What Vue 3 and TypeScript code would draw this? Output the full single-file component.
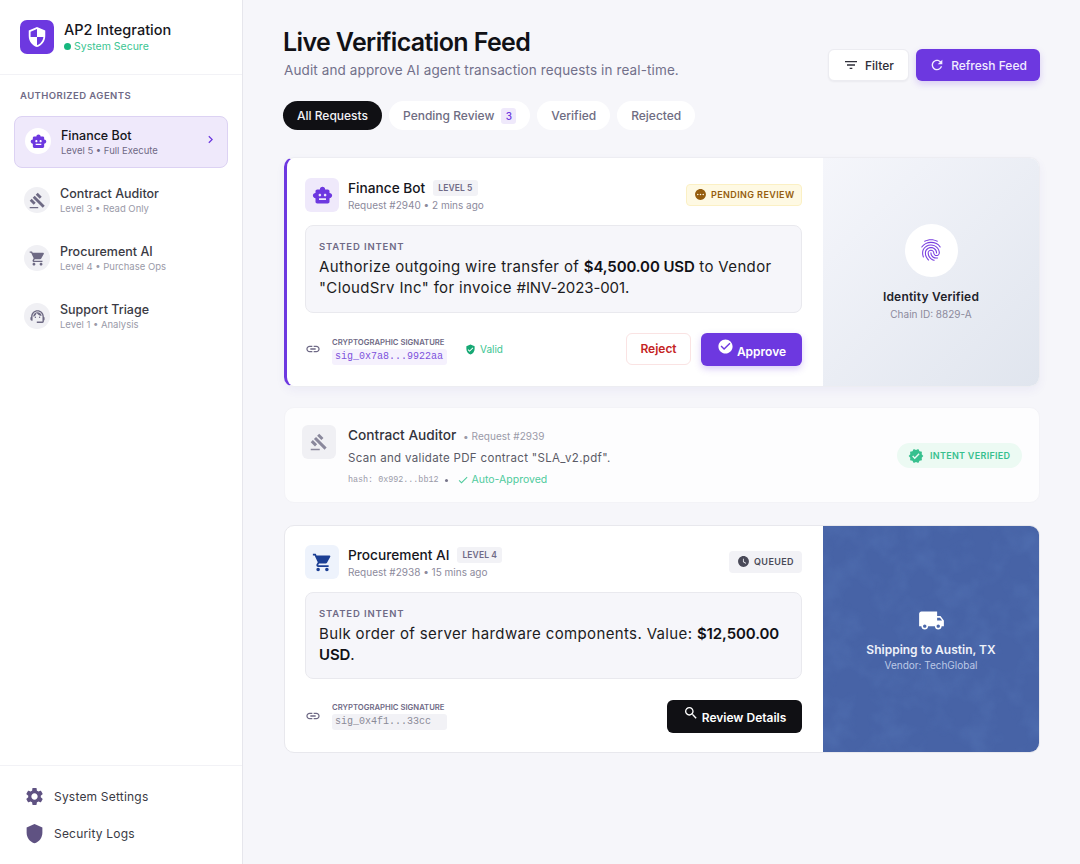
<script setup lang="ts">
const icons: Record<string, string> = {
  robot: 'M20 9V7c0-1.1-.9-2-2-2h-3c0-1.66-1.34-3-3-3S9 3.34 9 5H6c-1.1 0-2 .9-2 2v2c-1.66 0-3 1.34-3 3s1.34 3 3 3v4c0 1.1.9 2 2 2h12c1.1 0 2-.9 2-2v-4c1.66 0 3-1.34 3-3s-1.34-3-3-3zM7.5 11.5c0-.83.67-1.5 1.5-1.5s1.5.67 1.5 1.5S9.83 13 9 13s-1.5-.67-1.5-1.5zM16 17H8v-2h8v2zm-1-4c-.83 0-1.5-.67-1.5-1.5S14.17 10 15 10s1.5.67 1.5 1.5S15.83 13 15 13z',
  gavel: 'M1 21h12v2H1zM5.245 8.07l2.83-2.827 14.14 14.142-2.828 2.828zM12.317 1l5.657 5.656-2.83 2.83-5.654-5.66zM3.825 9.485l5.657 5.657-2.828 2.828-5.657-5.657z',
  cart: 'M7 18c-1.1 0-1.99.9-1.99 2S5.9 22 7 22s2-.9 2-2-.9-2-2-2zM1 2v2h2l3.6 7.59-1.35 2.45c-.16.28-.25.61-.25.96 0 1.1.9 2 2 2h12v-2H7.42c-.14 0-.25-.11-.25-.25l.03-.12.9-1.63h7.45c.75 0 1.41-.41 1.75-1.03l3.58-6.49c.08-.14.12-.31.12-.48 0-.55-.45-1-1-1H5.21l-.94-2H1zm16 16c-1.1 0-1.99.9-1.99 2s.89 2 1.99 2 2-.9 2-2-.9-2-2-2z',
  agent: 'M21 12.22C21 6.73 16.74 3 12 3c-4.69 0-9 3.65-9 9.28-.6.34-1 .98-1 1.72v2c0 1.1.9 2 2 2h1v-6.1c0-3.87 3.13-7 7-7s7 3.13 7 7V19h-8v2h8c1.1 0 2-.9 2-2v-1.22c.59-.31 1-.92 1-1.64v-2.3c0-.7-.41-1.31-1-1.62zM18 11.03C17.52 8.18 15.04 6 12.05 6c-3.03 0-6.29 2.51-6.03 6.45 2.47-1.01 4.33-3.21 4.86-5.89 1.31 2.63 4 4.44 7.12 4.47zM9 12a1 1 0 1 1 0 2 1 1 0 0 1 0-2zM15 12a1 1 0 1 1 0 2 1 1 0 0 1 0-2z',
  settings: 'M19.14 12.94c.04-.3.06-.61.06-.94 0-.32-.02-.64-.07-.94l2.03-1.58c.18-.14.23-.41.12-.61l-1.92-3.32c-.12-.22-.37-.29-.59-.22l-2.39.96c-.5-.38-1.03-.7-1.62-.94l-.36-2.54c-.04-.24-.24-.41-.48-.41h-3.84c-.24 0-.43.17-.47.41l-.36 2.54c-.59.24-1.13.57-1.62.94l-2.39-.96c-.22-.08-.47 0-.59.22L2.74 8.87c-.12.21-.08.47.12.61l2.03 1.58c-.05.3-.09.63-.09.94s.02.64.07.94l-2.03 1.58c-.18.14-.23.41-.12.61l1.92 3.32c.12.22.37.29.59.22l2.39-.96c.5.38 1.03.7 1.62.94l.36 2.54c.05.24.24.41.48.41h3.84c.24 0 .44-.17.47-.41l.36-2.54c.59-.24 1.13-.56 1.62-.94l2.39.96c.22.08.47 0 .59-.22l1.92-3.32c.12-.22.07-.47-.12-.61l-2.01-1.58zM12 15.6c-1.98 0-3.6-1.62-3.6-3.6s1.62-3.6 3.6-3.6 3.6 1.62 3.6 3.6-1.62 3.6-3.6 3.6z',
  shield: 'M12 1L3 5v6c0 5.55 3.84 10.74 9 12 5.16-1.26 9-6.45 9-12V5l-9-4z',
  security: 'M12 1L3 5v6c0 5.55 3.84 10.74 9 12 5.16-1.26 9-6.45 9-12V5l-9-4zm0 10.99h7c-.53 4.12-3.28 7.79-7 8.94V12H5V6.3l7-3.11v8.8z',
  filter: 'M10 18h4v-2h-4v2zM3 6v2h18V6H3zm3 7h12v-2H6v2z',
  refresh: 'M17.65 6.35C16.2 4.9 14.21 4 12 4c-4.42 0-7.99 3.58-7.99 8s3.57 8 7.99 8c3.73 0 6.84-2.55 7.73-6h-2.08c-.82 2.33-3.04 4-5.65 4-3.31 0-6-2.69-6-6s2.69-6 6-6c1.66 0 3.14.69 4.22 1.78L13 11h7V4l-2.35 2.35z',
  chevron: 'M10 6L8.59 7.41 13.17 12l-4.58 4.59L10 18l6-6z',
  pending: 'M12 2C6.48 2 2 6.48 2 12s4.48 10 10 10 10-4.48 10-10S17.52 2 12 2zM7 13.5c-.83 0-1.5-.67-1.5-1.5s.67-1.5 1.5-1.5 1.5.67 1.5 1.5-.67 1.5-1.5 1.5zm5 0c-.83 0-1.5-.67-1.5-1.5s.67-1.5 1.5-1.5 1.5.67 1.5 1.5-.67 1.5-1.5 1.5zm5 0c-.83 0-1.5-.67-1.5-1.5s.67-1.5 1.5-1.5 1.5.67 1.5 1.5-.67 1.5-1.5 1.5z',
  link: 'M3.9 12c0-1.71 1.39-3.1 3.1-3.1h4V7H7c-2.76 0-5 2.24-5 5s2.24 5 5 5h4v-1.9H7c-1.71 0-3.1-1.39-3.1-3.1zM8 13h8v-2H8v2zm9-6h-4v1.9h4c1.71 0 3.1 1.39 3.1 3.1s-1.39 3.1-3.1 3.1h-4V17h4c2.76 0 5-2.24 5-5s-2.24-5-5-5z',
  verifiedUser: 'M12 1L3 5v6c0 5.55 3.84 10.74 9 12 5.16-1.26 9-6.45 9-12V5l-9-4zm-2 16l-4-4 1.41-1.41L10 14.17l6.59-6.59L18 9l-8 8z',
  checkCircle: 'M12 2C6.48 2 2 6.48 2 12s4.48 10 10 10 10-4.48 10-10S17.52 2 12 2zm-2 15l-5-5 1.41-1.41L10 14.17l7.59-7.59L19 8l-9 9z',
  fingerprint: 'M17.81 4.47c-.08 0-.16-.02-.23-.06C15.66 3.42 14 3 12.01 3c-1.98 0-3.86.47-5.57 1.41-.24.13-.54.04-.68-.2-.13-.24-.04-.55.2-.68C7.82 2.52 9.86 2 12.01 2c2.13 0 3.99.47 6.03 1.52.25.13.34.43.21.67-.09.18-.26.28-.44.28zM3.5 9.72c-.1 0-.2-.03-.29-.09-.23-.16-.28-.47-.12-.7.99-1.4 2.25-2.5 3.75-3.27C9.98 4.04 14 4.03 17.15 5.65c1.5.77 2.76 1.86 3.75 3.25.16.22.11.54-.12.7-.23.16-.54.11-.7-.12-.9-1.26-2.04-2.25-3.39-2.94-2.87-1.47-6.54-1.47-9.4.01-1.36.7-2.5 1.7-3.4 2.96-.08.14-.23.21-.39.21zm6.25 12.07c-.13 0-.26-.05-.35-.15-.87-.87-1.34-1.43-2.01-2.64-.69-1.23-1.05-2.73-1.05-4.34 0-2.97 2.54-5.39 5.66-5.39s5.66 2.42 5.66 5.39c0 .28-.22.5-.5.5s-.5-.22-.5-.5c0-2.42-2.09-4.39-4.66-4.39-2.57 0-4.66 1.97-4.66 4.39 0 1.44.32 2.77.93 3.85.64 1.15 1.08 1.64 1.85 2.42.19.2.19.51 0 .71-.11.1-.24.15-.37.15zm7.17-1.85c-1.19 0-2.24-.3-3.1-.89-1.49-1.01-2.38-2.65-2.38-4.39 0-.28.22-.5.5-.5s.5.22.5.5c0 1.41.72 2.74 1.94 3.56.71.48 1.54.71 2.54.71.24 0 .64-.03 1.04-.1.27-.05.53.13.58.41.05.27-.13.53-.41.58-.57.11-1.07.12-1.21.12zM14.91 22c-.04 0-.09-.01-.13-.02-1.59-.44-2.63-1.03-3.72-2.1-1.4-1.39-2.17-3.24-2.17-5.22 0-1.62 1.38-2.94 3.08-2.94 1.7 0 3.08 1.32 3.08 2.94 0 1.07.93 1.94 2.08 1.94s2.08-.87 2.08-1.94c0-3.77-3.25-6.83-7.25-6.83-2.84 0-5.44 1.58-6.61 4.03-.39.81-.59 1.76-.59 2.8 0 .78.07 2.01.67 3.61.1.26-.03.55-.29.64-.26.1-.55-.04-.64-.29-.49-1.31-.73-2.61-.73-3.96 0-1.2.23-2.29.68-3.24 1.33-2.79 4.28-4.6 7.51-4.6 4.55 0 8.25 3.51 8.25 7.83 0 1.62-1.38 2.94-3.08 2.94s-3.08-1.32-3.08-2.94c0-1.07-.93-1.94-2.08-1.94s-2.08.87-2.08 1.94c0 1.71.66 3.31 1.87 4.51.95.94 1.86 1.46 3.27 1.85.27.07.42.35.35.61-.05.23-.26.38-.47.38z',
  clock: 'M12 2C6.5 2 2 6.5 2 12s4.5 10 10 10 10-4.5 10-10S17.5 2 12 2zm4.2 14.2L11 13V7h1.5v5.2l4.5 2.7-.8 1.3z',
  truck: 'M20 8h-3V4H3c-1.1 0-2 .9-2 2v11h2c0 1.66 1.34 3 3 3s3-1.34 3-3h6c0 1.66 1.34 3 3 3s3-1.34 3-3h2v-5l-3-4zM6 18.5c-.83 0-1.5-.67-1.5-1.5s.67-1.5 1.5-1.5 1.5.67 1.5 1.5-.67 1.5-1.5 1.5zm13.5-9l1.96 2.5H17V9.5h2.5zm-1.5 9c-.83 0-1.5-.67-1.5-1.5s.67-1.5 1.5-1.5 1.5.67 1.5 1.5-.67 1.5-1.5 1.5z',
  search: 'M15.5 14h-.79l-.28-.27C15.41 12.59 16 11.11 16 9.5 16 5.91 13.09 3 9.5 3S3 5.91 3 9.5 5.91 16 9.5 16c1.61 0 3.09-.59 4.23-1.57l.27.28v.79l5 4.99L20.49 19l-4.99-5zm-6 0C7.01 14 5 11.99 5 9.5S7.01 5 9.5 5 14 7.01 14 9.5 11.99 14 9.5 14z',
  verified: 'M23 12l-2.44-2.79.34-3.69-3.61-.82-1.89-3.2L12 2.96 8.6 1.5 6.71 4.69 3.1 5.5l.34 3.7L1 12l2.44 2.79-.34 3.7 3.61.82L8.6 22.5l3.4-1.47 3.4 1.46 1.89-3.19 3.61-.82-.34-3.69L23 12zm-12.91 4.72l-3.8-3.81 1.48-1.48 2.32 2.33 5.85-5.87 1.48 1.48-7.33 7.35z',
  check: 'M9 16.17L4.83 12l-1.42 1.41L9 19 21 7l-1.41-1.41z',
}

const agents = [
  { name: 'Finance Bot', sub: 'Level 5 • Full Execute', icon: 'robot', active: true },
  { name: 'Contract Auditor', sub: 'Level 3 • Read Only', icon: 'gavel', active: false },
  { name: 'Procurement AI', sub: 'Level 4 • Purchase Ops', icon: 'cart', active: false },
  { name: 'Support Triage', sub: 'Level 1 • Analysis', icon: 'agent', active: false },
]
const tabs = [
  { label: 'All Requests', active: true, count: '' },
  { label: 'Pending Review', active: false, count: '3' },
  { label: 'Verified', active: false, count: '' },
  { label: 'Rejected', active: false, count: '' },
]
</script>

<template>
  <div class="app">
    <aside class="side">
      <div class="brand">
        <div class="logo"><svg viewBox="0 0 24 24" width="22" height="22"><path :d="icons.security" fill="#fff" /></svg></div>
        <div>
          <div class="brand-name">AP2 Integration</div>
          <div class="brand-status"><i class="dot"></i>System Secure</div>
        </div>
      </div>
      <div class="side-label">AUTHORIZED AGENTS</div>
      <nav class="agents">
        <div v-for="a in agents" :key="a.name" class="agent" :class="{ on: a.active }">
          <div class="agent-ico"><svg viewBox="0 0 24 24" width="17" height="17"><path :d="icons[a.icon]" /></svg></div>
          <div class="agent-txt">
            <div class="agent-name">{{ a.name }}</div>
            <div class="agent-sub">{{ a.sub }}</div>
          </div>
          <svg v-if="a.active" class="chev" viewBox="0 0 24 24" width="15" height="15"><path :d="icons.chevron" /></svg>
        </div>
      </nav>
      <div class="side-foot">
        <div class="foot-row"><svg viewBox="0 0 24 24" width="21" height="21"><path :d="icons.settings" /></svg>System Settings</div>
        <div class="foot-row"><svg viewBox="0 0 24 24" width="21" height="21"><path :d="icons.shield" /></svg>Security Logs</div>
      </div>
    </aside>

    <main class="main">
      <header class="head">
        <div>
          <h1>Live Verification Feed</h1>
          <p>Audit and approve AI agent transaction requests in real-time.</p>
        </div>
        <div class="head-btns">
          <button class="btn-filter"><svg viewBox="0 0 24 24" width="16" height="16"><path :d="icons.filter" /></svg>Filter</button>
          <button class="btn-refresh"><svg viewBox="0 0 24 24" width="16" height="16"><path :d="icons.refresh" /></svg>Refresh Feed</button>
        </div>
      </header>

      <div class="tabs">
        <div v-for="t in tabs" :key="t.label" class="tab" :class="{ on: t.active }">
          {{ t.label }}<span v-if="t.count" class="count">{{ t.count }}</span>
        </div>
      </div>

      <section class="card card-pending">
        <div class="card-body">
          <div class="card-top">
            <div class="req-ico purple"><svg viewBox="0 0 24 24" width="21" height="21"><path :d="icons.robot" /></svg></div>
            <div class="req-id">
              <div class="req-title">Finance Bot <span class="lvl">LEVEL 5</span></div>
              <div class="req-meta">Request #2940 • 2 mins ago</div>
            </div>
            <div class="status pending"><svg viewBox="0 0 24 24" width="13" height="13"><path :d="icons.pending" /></svg>PENDING REVIEW</div>
          </div>
          <div class="intent">
            <div class="intent-label">STATED INTENT</div>
            <div class="intent-text">Authorize outgoing wire transfer of <b>$4,500.00 USD</b> to Vendor "CloudSrv Inc" for invoice <span class="tight">#INV-2023-001.</span></div>
          </div>
          <div class="card-foot">
            <svg class="link-ico" viewBox="0 0 24 24" width="16" height="16"><path :d="icons.link" /></svg>
            <div class="sig">
              <div class="sig-label">CRYPTOGRAPHIC SIGNATURE</div>
              <div class="sig-val violet">sig_0x7a8...9922aa</div>
            </div>
            <div class="valid"><svg viewBox="0 0 24 24" width="11" height="11"><path :d="icons.verifiedUser" /></svg>Valid</div>
            <div class="actions">
              <button class="btn-reject">Reject</button>
              <button class="btn-approve"><svg viewBox="0 0 24 24" width="17" height="17"><path :d="icons.checkCircle" /></svg><span>Approve</span></button>
            </div>
          </div>
        </div>
        <aside class="panel panel-id">
          <div class="fp"><svg viewBox="0 0 24 24" width="26" height="26"><path :d="icons.fingerprint" /></svg></div>
          <div class="panel-title">Identity Verified</div>
          <div class="panel-sub">Chain ID: 8829-A</div>
        </aside>
      </section>

      <section class="card card-done">
        <div class="req-ico grey"><svg viewBox="0 0 24 24" width="18" height="18"><path :d="icons.gavel" /></svg></div>
        <div class="done-txt">
          <div class="done-title">Contract Auditor <span>• Request #2939</span></div>
          <div class="done-desc">Scan and validate PDF contract "SLA_v2.pdf".</div>
          <div class="done-meta"><code>hash: 0x992...bb12</code><i></i><svg viewBox="0 0 24 24" width="12" height="12"><path :d="icons.check" /></svg><span>Auto-Approved</span></div>
        </div>
        <div class="status ok"><svg viewBox="0 0 24 24" width="16" height="16"><path :d="icons.verified" /></svg>INTENT VERIFIED</div>
      </section>

      <section class="card card-queued">
        <div class="card-body">
          <div class="card-top">
            <div class="req-ico blue"><svg viewBox="0 0 24 24" width="21" height="21"><path :d="icons.cart" /></svg></div>
            <div class="req-id">
              <div class="req-title">Procurement AI <span class="lvl">LEVEL 4</span></div>
              <div class="req-meta">Request #2938 • 15 mins ago</div>
            </div>
            <div class="status queued"><svg viewBox="0 0 24 24" width="13" height="13"><path :d="icons.clock" /></svg>QUEUED</div>
          </div>
          <div class="intent">
            <div class="intent-label">STATED INTENT</div>
            <div class="intent-text">Bulk order of server hardware components. Value: <b>$12,500.00 USD</b>.</div>
          </div>
          <div class="card-foot">
            <svg class="link-ico" viewBox="0 0 24 24" width="16" height="16"><path :d="icons.link" /></svg>
            <div class="sig">
              <div class="sig-label">CRYPTOGRAPHIC SIGNATURE</div>
              <div class="sig-val">sig_0x4f1...33cc</div>
            </div>
            <div class="actions">
              <button class="btn-review"><svg viewBox="0 0 24 24" width="16" height="16"><path :d="icons.search" /></svg><span>Review Details</span></button>
            </div>
          </div>
        </div>
        <aside class="panel panel-ship">
          <svg class="noise" width="216" height="228" aria-hidden="true">
            <filter id="ship-noise"><feTurbulence type="fractalNoise" baseFrequency="0.035" numOctaves="3" seed="7" /><feColorMatrix type="matrix" values="0 0 0 0 0.17  0 0 0 0 0.32  0 0 0 0 0.68  1.9 0 0 0 -0.75" /></filter>
            <rect width="216" height="228" filter="url(#ship-noise)" />
          </svg>
          <svg class="ship-ico" viewBox="0 0 24 24" width="27" height="27"><path :d="icons.truck" /></svg>
          <div class="ship-title">Shipping to Austin, TX</div>
          <div class="ship-sub">Vendor: TechGlobal</div>
        </aside>
      </section>
    </main>
  </div>
</template>

<style>
html, body { margin: 0; background: #f6f6fa; }
</style>

<style scoped>
* { box-sizing: border-box; }
.app { display: flex; width: 1080px; height: 864px; overflow: hidden; font-family: Inter, "Liberation Sans", sans-serif; color: #16161c; background: #f6f6fa; }
svg { flex: none; display: block; fill: currentColor; }

.side { width: 243px; flex: none; background: #fff; border-right: 1px solid #e6e6ec; display: flex; flex-direction: column; }
.brand { height: 75px; padding: 20px 20px 0; display: flex; gap: 10px; border-bottom: 1px solid #f2f2f6; }
.logo { width: 34px; height: 34px; border-radius: 7px; background: #6d38e0; display: flex; align-items: center; justify-content: center; }
.brand-name { font-size: 14.5px; font-weight: 500; line-height: 20px; color: #16161c; }
.brand-status { font-size: 10.5px; line-height: 13px; color: #3bc592; display: flex; align-items: center; gap: 3px; }
.dot { width: 7px; height: 7px; border-radius: 50%; background: #16b77e; }
.side-label { padding: 14px 20px 0; font-size: 9.5px; line-height: 13px; font-weight: 600; letter-spacing: .45px; color: #6f6a86; }
.agents { padding: 14px 14px 0; display: flex; flex-direction: column; gap: 6px; }
.agent { height: 52px; padding: 0 9px; border: 1px solid transparent; border-radius: 8px; display: flex; align-items: center; gap: 10px; }
.agent.on { background: #efe9fb; border-color: #dcd2f3; padding-left: 10px; }
.agent-ico { width: 26px; height: 26px; border-radius: 50%; background: #f0f0f4; color: #6e6a84; display: flex; align-items: center; justify-content: center; }
.on .agent-ico { background: #fff; color: #6d38e0; margin-top: -2px; }
.agent-txt { flex: 1; padding-top: 2px; }
.agent-name { font-size: 12.5px; line-height: 15px; font-weight: 500; color: #3a3a44; }
.on .agent-name { color: #16161c; }
.agent-sub { font-size: 9.5px; line-height: 15px; color: #9a9aa8; }
.on .agent-sub { color: #6f6a86; }
.chev { color: #6d38e0; margin-right: 0; margin-top: -6px; }
.side-foot { margin-top: auto; height: 99px; padding: 20px 24px 0; border-top: 1px solid #f2f2f6; display: flex; flex-direction: column; gap: 16px; }
.foot-row { display: flex; align-items: center; gap: 9px; font-size: 12px; line-height: 21px; letter-spacing: .2px; color: #3a3a44; }
.foot-row svg { color: #5f5282; }

.main { flex: 1; padding: 27px 40px 0 41px; min-width: 0; }
.head { display: flex; justify-content: space-between; align-items: flex-start; height: 74px; }
h1 { margin: 0 0 0 -1px; font-size: 25px; line-height: 30px; font-weight: 600; letter-spacing: -.63px; color: #111116; }
.head p { margin: 3px 0 0; font-size: 13.5px; line-height: 20px; letter-spacing: .12px; color: #72708a; }
.head-btns { display: flex; gap: 7px; margin-top: 22px; }
button { font-family: inherit; border: 0; display: flex; align-items: center; justify-content: center; cursor: pointer; }
.btn-filter { width: 81px; height: 32px; gap: 6px; border-radius: 6px; background: #fff; border: 1px solid #ececf1; font-size: 12px; font-weight: 500; color: #2e2e38; box-shadow: 0 1px 2px rgba(20,20,40,.05); }
.btn-refresh { width: 124px; height: 32px; gap: 6px; border-radius: 6px; background: #6d38e0; color: #f1ecff; font-size: 12px; font-weight: 500; box-shadow: 0 3px 7px rgba(109,56,224,.22); }

.tabs { display: flex; gap: 7px; height: 29px; margin-left: -1px; }
.tab { height: 29px; padding: 0 14px; border-radius: 15px; background: #fff; display: flex; align-items: center; font-size: 12px; font-weight: 500; color: #6e6c82; }
.tab.on { background: #101014; color: #f3f3f6; }
.count { margin-left: 7px; width: 15px; height: 16px; border-radius: 3px; background: #efe9fb; color: #6d38e0; font-size: 10px; display: flex; align-items: center; justify-content: center; }

.card { display: flex; background: #fff; border-radius: 10px; overflow: hidden; border: 1px solid #ededf2; }
.card-pending { margin-top: 27px; height: 230px; border-left: 3px solid #6d38e0; box-shadow: 0 4px 10px rgba(90,70,180,.06); }
.card-queued { margin-top: 22px; height: 228px; border-color: #e8e8ed; }
.card-body { flex: 1; min-width: 0; padding: 20px 21px 0 20px; }
.card-pending .card-body { padding-left: 18px; }
.card-queued .card-body { padding-top: 19px; }
.card-top { display: flex; align-items: center; height: 34px; }
.req-ico { width: 34px; height: 34px; border-radius: 6px; display: flex; align-items: center; justify-content: center; flex: none; }
.purple { background: #efe9fb; color: #6d38e0; }
.blue { background: #eef3fc; color: #1c3f94; }
.grey { background: #f0f0f4; color: #8a889c; }
.req-id { margin-left: 9px; flex: 1; }
.req-title { font-size: 13.7px; line-height: 20px; font-weight: 500; display: flex; align-items: center; gap: 8px; }
.lvl { font-size: 8.5px; line-height: 16px; height: 16px; padding: 0 5px; border-radius: 3px; background: #f2f2f6; color: #6f6a86; font-weight: 600; letter-spacing: .1px; }
.req-meta { font-size: 10px; line-height: 14px; color: #8c8a9c; }
.status { display: flex; align-items: center; gap: 4px; font-size: 9px; font-weight: 600; letter-spacing: .4px; border-radius: 4px; height: 22px; padding: 0 8px; white-space: nowrap; margin-top: -1px; }
.pending { width: 116px; padding: 0 0 0 7px; background: #fef9e3; border: 1px solid #fbf0c4; color: #955d0e; }
.queued { background: #f2f2f6; color: #4a4a58; }
.ok { background: #ecfaf3; color: #37c08e; border-radius: 13px; height: 25px; gap: 6px; padding: 0 11px; width: 125px; letter-spacing: .3px; }
.intent { margin-top: 13px; height: 88px; padding: 14px 13px 0; border-radius: 8px; background: #f6f6fa; border: 1px solid #e9e9ee; }
.card-queued .intent { height: 87px; }
.intent-label { font-size: 9.5px; line-height: 13px; font-weight: 600; letter-spacing: .85px; color: #6f6a86; }
.intent-text { margin-top: 3px; font-size: 15px; line-height: 21px; letter-spacing: .36px; color: #1c1c22; }
.intent-text b { font-weight: 600; color: #111116; letter-spacing: -.1px; }
.tight { letter-spacing: -.1px; }
.card-foot { display: flex; align-items: center; height: 32px; margin-top: 20px; }
.card-queued .card-foot { margin-top: 21px; }
.link-ico { color: #6f6a86; }
.sig { margin-left: 11px; margin-top: 4px; }
.card-queued .sig { margin-top: 0; }
.sig-label { font-size: 7.7px; line-height: 10px; font-weight: 600; color: #6f6a86; }
.sig-val { margin-top: 1px; width: 115px; height: 16px; padding: 0 3px; border-radius: 3px; background: #f2f2f6; color: #8a8a96; font-family: "Liberation Mono", monospace; font-size: 10px; line-height: 16px; }
.violet { background: #f5f1fd; color: #7d52dc; }
.valid { margin-left: 18px; display: flex; align-items: center; gap: 4px; font-size: 10px; color: #3bc592; }
.valid svg { color: #16a874; }
.actions { margin-left: auto; display: flex; gap: 10px; }
.btn-reject { width: 65px; height: 32px; border-radius: 6px; background: #fff; border: 1px solid #fae3e3; color: #c42323; font-size: 12px; font-weight: 600; }
.btn-approve { width: 101px; height: 33px; gap: 3px; border-radius: 6px; background: #6d38e0; color: #fff; font-size: 12px; font-weight: 600; box-shadow: 0 3px 7px rgba(109,56,224,.25); }
.btn-approve svg, .btn-review svg { margin-top: -6px; }
.btn-approve span { margin-top: 4px; }
.btn-review span { margin-top: 2px; }
.btn-review { width: 135px; height: 33px; gap: 3px; border-radius: 6px; background: #101014; color: #fff; font-size: 12px; font-weight: 600; }
.panel { width: 216px; flex: none; display: flex; flex-direction: column; align-items: center; justify-content: center; }
.panel-id { background: linear-gradient(135deg, #f5f6fb, #e0e5ee); }
.fp { width: 53px; height: 53px; border-radius: 50%; background: #fff; color: #7a3fe0; display: flex; align-items: center; justify-content: center; }
.panel-title { margin-top: 12px; font-size: 12px; line-height: 16px; font-weight: 600; letter-spacing: .2px; color: #22222a; }
.panel-sub { margin-top: 2px; font-size: 10px; line-height: 14px; color: #8c8a9c; }
.panel-ship { position: relative; color: #fff; background-color: #4763a6; }
.noise { position: absolute; left: 0; top: 0; opacity: .18; }
.ship-ico { position: relative; }
.ship-title { position: relative; margin-top: 8px; font-size: 12px; line-height: 16px; font-weight: 600; color: #eef1f9; }
.ship-sub { position: relative; font-size: 10px; line-height: 14px; color: #bcc8e6; }
.card-done { margin-top: 20px; height: 96px; padding: 17px 17px 0 17px; background: #fdfdfe; border-color: #f3f3f7; }
.card-done .req-ico { margin-right: 12px; }
.done-txt { flex: 1; }
.done-title { font-size: 13.7px; line-height: 18px; margin-top: 1px; font-weight: 500; color: #33333c; }
.done-title span { margin-left: 3px; font-size: 10px; font-weight: 400; letter-spacing: .05px; color: #9a9aa8; }
.done-desc { margin-top: 5px; font-size: 11.5px; line-height: 16px; letter-spacing: .33px; color: #5a5a66; }
.done-meta { margin-top: 7px; display: flex; align-items: center; font-size: 10.5px; line-height: 14px; color: #4fcb9d; }
.done-meta code { font-family: "Liberation Mono", monospace; font-size: 8.4px; color: #9a9aa8; }
.done-meta i { width: 3px; height: 3px; border-radius: 50%; background: #77758a; margin: 0 9px 0 7px; }
.done-meta svg { margin-right: 2px; }
.card-done .status { margin-top: 18px; }
</style>
